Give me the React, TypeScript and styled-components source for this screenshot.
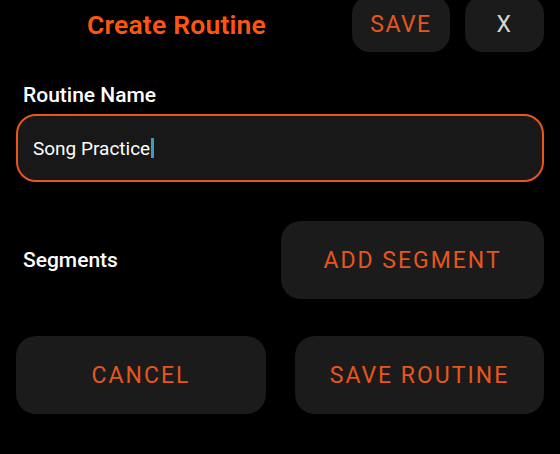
import styled, { createGlobalStyle } from 'styled-components';

const GlobalStyle = createGlobalStyle`
  html, body {
    margin: 0;
    padding: 0;
    background: #000;
  }
  body {
    font-family: Roboto, "Noto Sans", sans-serif;
    overflow: hidden;
  }
`;

const App = () => {
  return (
    <>
      <GlobalStyle />
      <Screen>
        <Header>
          <Title>Create Routine</Title>
          <TopButton $width={98}>SAVE</TopButton>
          <TopButton $width={79} $light>
            X
          </TopButton>
        </Header>
        <Label>Routine Name</Label>
        <InputBox>
          <InputText>Song Practice</InputText>
          <Caret />
        </InputBox>
        <SegmentsRow>
          <SegmentsLabel>Segments</SegmentsLabel>
          <ActionButton $width={263}>ADD SEGMENT</ActionButton>
        </SegmentsRow>
        <Footer>
          <ActionButton $width={250}>CANCEL</ActionButton>
          <ActionButton $width={249}>SAVE ROUTINE</ActionButton>
        </Footer>
      </Screen>
    </>
  );
};

const Screen = styled.div`
  display: flex;
  flex-direction: column;
  padding: 0 16px;
  height: 454px;
  box-sizing: border-box;
`;

const Header = styled.div`
  display: flex;
  align-items: center;
  gap: 15px;
  height: 56px;
  margin-top: -4px;
`;

const Title = styled.h1`
  flex: 1;
  margin: 0;
  text-align: center;
  color: #ff560f;
  font-size: 26.5px;
  font-weight: 600;
  letter-spacing: 0.2px;
`;

const TopButton = styled.button<{ $width: number; $light?: boolean }>`
  width: ${(p) => p.$width}px;
  height: 56px;
  border: none;
  border-radius: 18px;
  background: #1b1b1b;
  color: ${(p) => (p.$light ? '#d6d6d6' : '#e8561c')};
  font-family: Roboto, sans-serif;
  font-size: 23px;
  letter-spacing: 1.5px;
  padding: 0;
`;

const Label = styled.div`
  margin: 31px 0 0 7px;
  color: #fff;
  font-size: 21px;
  font-weight: 500;
  line-height: 24px;
`;

const InputBox = styled.div`
  display: flex;
  align-items: center;
  height: 68px;
  margin-top: 7px;
  box-sizing: border-box;
  border: 2px solid #e8561c;
  border-radius: 20px;
  background: #181818;
  padding: 0 0 0 15px;
`;

const InputText = styled.span`
  color: #fff;
  font-size: 19px;
`;

const Caret = styled.span`
  width: 3px;
  height: 20px;
  margin-left: 1px;
  background: #3a9cc4;
`;

const SegmentsRow = styled.div`
  display: flex;
  align-items: center;
  justify-content: space-between;
  margin-top: 39px;
`;

const SegmentsLabel = styled.div`
  margin-left: 7px;
  color: #fff;
  font-size: 21px;
  font-weight: 500;
`;

const ActionButton = styled.button<{ $width: number }>`
  width: ${(p) => p.$width}px;
  height: 78px;
  border: none;
  border-radius: 20px;
  background: #1b1b1b;
  color: #e8561c;
  font-family: Roboto, sans-serif;
  font-size: 23px;
  letter-spacing: 2px;
  padding: 0;
`;

const Footer = styled.div`
  display: flex;
  justify-content: space-between;
  margin-top: 37px;
`;

export default App;
